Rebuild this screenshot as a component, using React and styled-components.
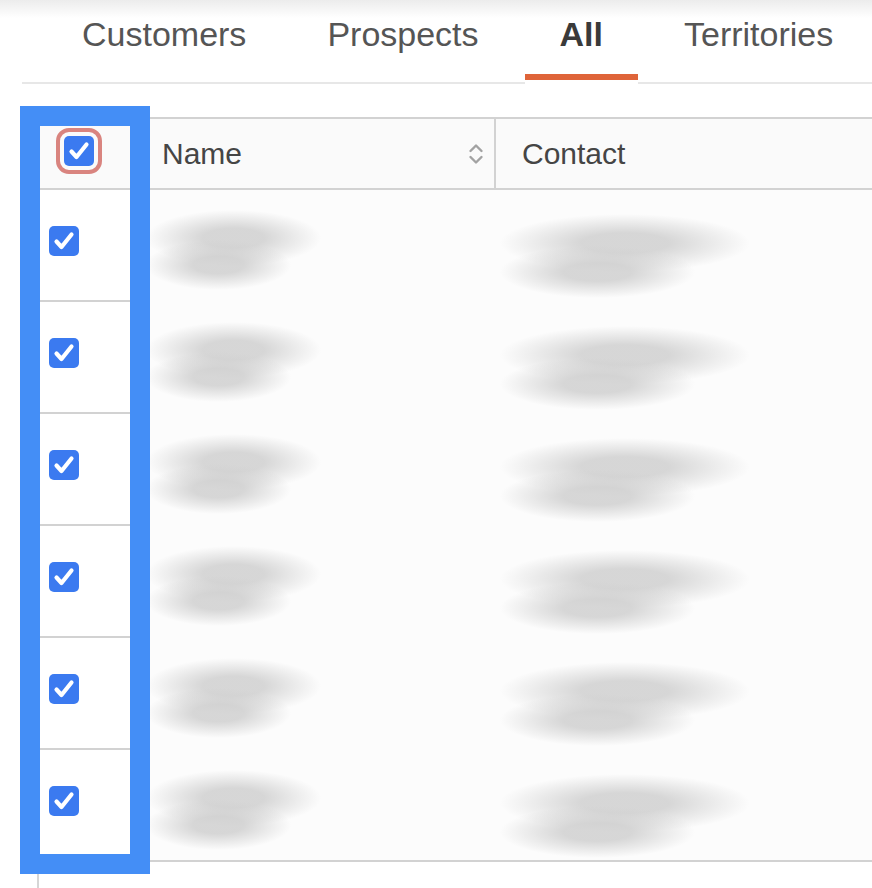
import styled, { createGlobalStyle } from "styled-components"

const GlobalStyle = createGlobalStyle`
    * {
        box-sizing: border-box;
    }
    body {
        margin: 0;
        background: #FFFFFF;
        font-family: "Liberation Sans", Arial, sans-serif;
    }
`

const tabs = ["Customers", "Prospects", "All", "Territories"]
const rows = [0, 1, 2, 3, 4, 5]

function Check({ ring }) {
    return (
        <Box $ring={ring}>
            <svg width="30" height="30" viewBox="0 0 30 30">
                <path d="M7.5 15.5 L12.5 21 L22.5 8.5" fill="none" stroke="#FFFFFF"
                    strokeWidth="4.2" strokeLinecap="round" strokeLinejoin="round" />
            </svg>
        </Box>
    )
}

function SortIcon() {
    return (
        <svg width="18" height="26" viewBox="0 0 18 26">
            <path d="M3.5 10 L9 4.5 L14.5 10" fill="none" stroke="#a2a2a2" strokeWidth="2.4" strokeLinecap="round" strokeLinejoin="round" />
            <path d="M3.5 16 L9 21.5 L14.5 16" fill="none" stroke="#a2a2a2" strokeWidth="2.4" strokeLinecap="round" strokeLinejoin="round" />
        </svg>
    )
}

export default function App() {
    return (
        <>
            <GlobalStyle />
            <Page>
                <TabBar>
                    {tabs.map((t) => (
                        <Tab key={t} $active={t === "All"}>{t}</Tab>
                    ))}
                </TabBar>
                <Content>
                    <Table>
                        <HeadCell $pl={25} $pb={6}>
                            <Check ring />
                        </HeadCell>
                        <HeadCell $pl={32} $divider>
                            <span>Name</span>
                            <Sort><SortIcon /></Sort>
                        </HeadCell>
                        <HeadCell $pl={26}>
                            <span>Contact</span>
                        </HeadCell>

                        {rows.map((i) => (
                            <Row key={i} $last={i === rows.length - 1}>
                                <CheckCell>
                                    <Check />
                                </CheckCell>
                                {/* the data is blurred out in the screenshot */}
                                <DataCell $pt={20} $pl={16}>
                                    <Smudge $w={175} $h={56} />
                                    <Smudge $w={145} $h={50} $overlap={26} />
                                </DataCell>
                                <DataCell $pt={24} $pl={4}>
                                    <Smudge $w={250} $h={58} />
                                    <Smudge $w={195} $h={52} $overlap={26} />
                                </DataCell>
                            </Row>
                        ))}
                    </Table>
                </Content>
                <Highlight />
            </Page>
        </>
    )
}

const Page = styled.div`
    position: relative;
    min-height: 888px;
    background: linear-gradient(to bottom, #ececec 0px, #FFFFFF 18px) no-repeat;
    overflow: hidden;
`
const TabBar = styled.div`
    display: flex;
    align-items: flex-end;
    gap: 11px;
    height: 84px;
    margin-left: 22px;
    padding-left: 25px;
    border-bottom: 2px solid #e7e7e7;
`
const Tab = styled.div`
    height: 80px;
    margin-bottom: 2px;
    padding: 14px 35px 0;
    font-size: 34px;
    line-height: 40px;
    color: ${(p) => (p.$active ? "#3a3a3a" : "#555555")};
    font-weight: ${(p) => (p.$active ? 700 : 400)};
    border-bottom: 6px solid ${(p) => (p.$active ? "#df6439" : "transparent")};
    box-shadow: ${(p) => (p.$active ? "0 4px 0 #FFFFFF" : "none")};
    white-space: nowrap;
`
const Content = styled.div`
    margin: 33px 0 0 37px;
    border-left: 2px solid #d6d6d6;
    min-height: 771px;
`
const Table = styled.div`
    display: grid;
    grid-template-columns: 91px 366px 1fr;
`
const HeadCell = styled.div`
    height: 73px;
    display: flex;
    align-items: center;
    padding-left: ${(p) => p.$pl}px;
    padding-bottom: ${(p) => p.$pb || 0}px;
    background: #fafafa;
    border-top: 2px solid #d2d2d2;
    border-bottom: 2px solid #d2d2d2;
    border-right: ${(p) => (p.$divider ? "2px solid #d2d2d2" : "none")};
    font-size: 30px;
    color: #454545;
`
const Sort = styled.span`
    margin-left: auto;
    margin-right: 9px;
    display: flex;
`
const Row = styled.div`
    display: contents;
    & > div {
        border-bottom: ${(p) => (p.$last ? "2px solid #d2d2d2" : "none")};
    }
`
const CheckCell = styled.div`
    height: 112px;
    display: flex;
    align-items: center;
    padding: 0 0 8px 10px;
    background: #FFFFFF;
    && {
        border-bottom: 2px solid #d2d2d2;
    }
`
const DataCell = styled.div`
    height: 112px;
    background: #fcfcfc;
    display: flex;
    flex-direction: column;
    align-items: flex-start;
    padding: ${(p) => p.$pt}px 0 0 ${(p) => p.$pl}px;
    overflow: hidden;
`
const Smudge = styled.span`
    display: block;
    flex-shrink: 0;
    width: ${(p) => p.$w}px;
    height: ${(p) => p.$h}px;
    margin-top: ${(p) => (p.$overlap ? -p.$overlap : 0)}px;
    background: radial-gradient(closest-side, rgba(205, 205, 205, 0.8) 35%, rgba(252, 252, 252, 0) 100%);
`
const Box = styled.div`
    width: 30px;
    height: 30px;
    border-radius: 5px;
    background: #3b7af0;
    display: flex;
    outline: ${(p) => (p.$ring ? "4px solid #d9847f" : "none")};
    outline-offset: 4px;
`
const Highlight = styled.div`
    position: absolute;
    left: 20px;
    top: 106px;
    width: 130px;
    height: 768px;
    border: 20px solid #448ef6;
    pointer-events: none;
`
